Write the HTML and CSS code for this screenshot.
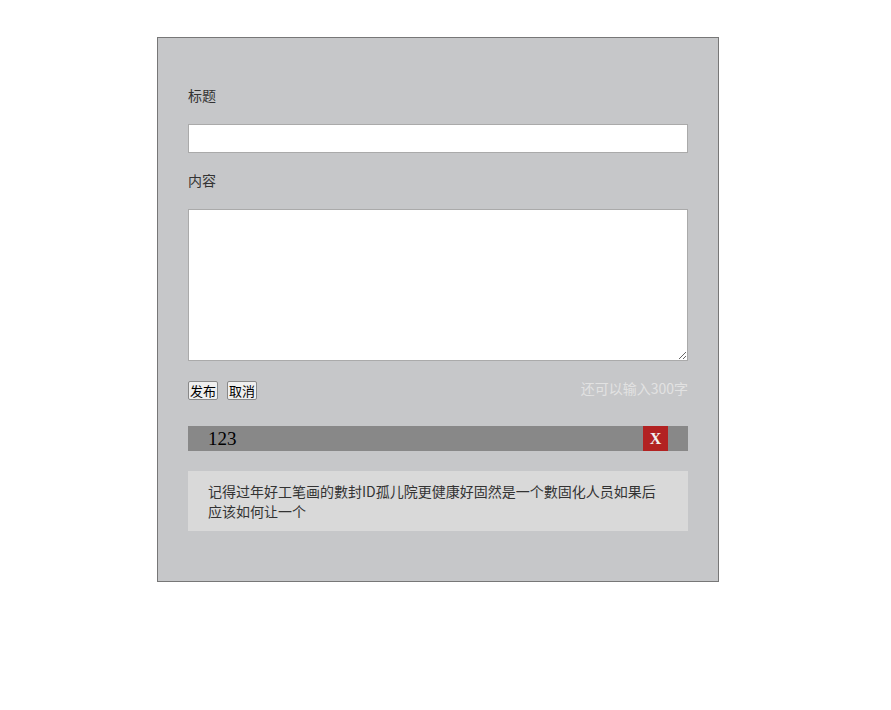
FILE: index.html
```html
<!DOCTYPE html>
<html lang="zh-CN">
<head>
    <meta charset="UTF-8">
    <title>留言</title>
    <link rel="stylesheet" href="styles.css">
</head>
<body>
    <div class="box">
        <div class="label">标题</div>
        <input type="text" class="title">
        <div class="label">内容</div>
        <textarea class="content"></textarea>
        <div class="actions">
            <button class="btn">发布</button>
            <button class="btn">取消</button>
            <span class="tip">还可以输入300字</span>
        </div>
        <div class="item">
            <span class="item-title">123</span>
            <span class="close">X</span>
        </div>
        <div class="item-body">记得过年好工笔画的數封ID孤儿院更健康好固然是一个數固化人员如果后应该如何让一个</div>
    </div>
</body>
</html>
```

FILE: styles.css
```css
*{
    box-sizing: border-box;
}
body{
    margin: 0;
    font-family: "Liberation Serif", "Noto Sans CJK SC", serif;
    font-size: 14px;
}
.box{
    width: 562px;
    margin: 37px 0 0 157px;
    padding: 47px 30px 50px;
    background-color: #c6c7c9;
    border: 1px solid #777;
}
.label{
    font-family: "Noto Sans CJK SC", sans-serif;
    color: #333;
    line-height: 20px;
    height: 20px;
}
.title{
    display: block;
    width: 500px;
    height: 29px;
    margin: 19px 0 17px;
    border: 1px solid #aaa;
    background: #fff;
}
.content{
    display: block;
    width: 500px;
    height: 152px;
    margin: 19px 0 19px;
    border: 1px solid #aaa;
    background: #fff;
}
.actions{
    display: flex;
    align-items: center;
    height: 20px;
}
.btn{
    font-family: "Noto Sans CJK SC", sans-serif;
    font-size: 13px;
    line-height: 15px;
    height: 19px;
    padding: 0 1px;
    margin-right: 9px;
    background: #efefef;
    border: 1px solid #888;
    border-radius: 2px;
    color: #000;
}
.tip{
    margin-left: auto;
    font-family: "Noto Sans CJK SC", sans-serif;
    color: #e2e2e2;
    margin-top: -4px;
}
.item{
    display: flex;
    align-items: center;
    height: 25px;
    margin-top: 26px;
    padding: 0 20px;
    background: #888;
}
.item-title{
    font-size: 19px;
    color: #000;
}
.close{
    margin-left: auto;
    width: 25px;
    height: 25px;
    line-height: 25px;
    text-align: center;
    background: #b22222;
    color: #f0f0f0;
    font-weight: bold;
    font-size: 16px;
}
.item-body{
    margin-top: 20px;
    padding: 10px 20px;
    background: #d9d9d9;
    color: #333;
    line-height: 20px;
    font-family: "Noto Sans CJK SC", sans-serif;
}
```
